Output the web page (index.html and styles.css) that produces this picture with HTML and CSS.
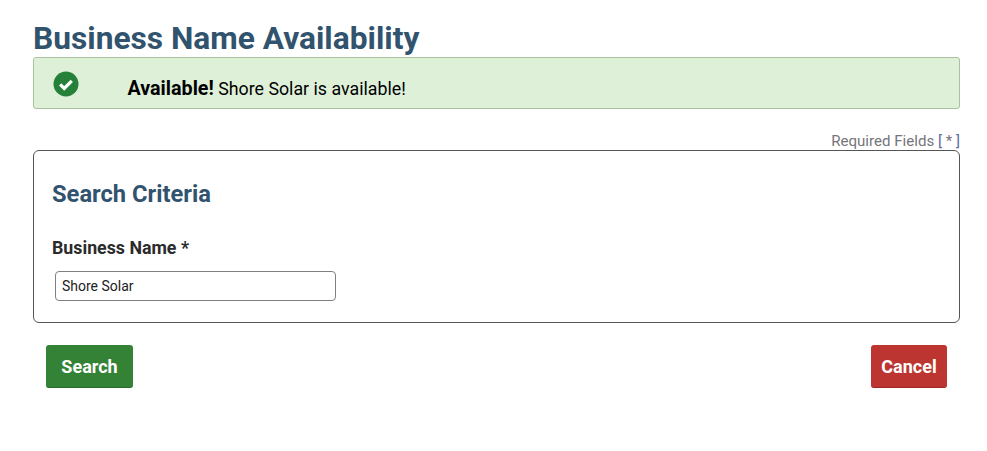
FILE: index.html
```html
<!DOCTYPE html>
<html lang="en">
<head>
    <meta charset="UTF-8">
    <title>Business Name Availability</title>
    <link rel="stylesheet" href="styles.css">
</head>
<body>
<div class="container">
    <h1>Business Name Availability</h1>

    <!-- result message -->
    <div class="alert-success">
        <svg class="alert-icon" width="26" height="26" viewBox="0 0 26 26">
            <circle cx="13" cy="13" r="12.5" fill="#258039"/>
            <path d="M7.2 13.4l4 4 7.6-7.6" fill="none" stroke="#fff" stroke-width="3.2"/>
        </svg>
        <div class="alert-text"><strong>Available!</strong> Shore Solar is available!</div>
    </div>

    <div class="required-note">Required Fields <span class="bracket">[</span> * <span class="bracket">]</span></div>

    <!-- search form -->
    <div class="box-criteria">
        <h2>Search Criteria</h2>
        <label for="businessName">Business Name *</label>
        <input type="text" id="businessName" value="Shore Solar">
    </div>

    <div class="button-group">
        <a href="#" class="btn btn-search">Search</a>
        <a href="#" class="btn btn-cancel">Cancel</a>
    </div>
</div>
</body>
</html>
```

FILE: styles.css
```css
/* base */
body {
    font-family: Roboto, Arial, sans-serif;
    margin: 0;
    background-color: #fff;
}
.container {
    width: 927px;
    margin-left: 33px;
    padding-top: 18px;
}

/* headings */
h1 {
    margin: 0;
    height: 39px;
    color: #31536e;
    font-size: 31.7px;
    line-height: 42px;
    font-weight: 700;
}
h2 {
    margin: 0 0 29px;
    color: #31536e;
    font-size: 23.7px;
    line-height: 28px;
    font-weight: 700;
}

/* result message */
.alert-success {
    display: flex;
    box-sizing: border-box;
    height: 52px;
    padding: 13px 19px;
    background: #dff0d8;
    border: 1px solid #a9c29e;
    border-radius: 3px;
}
.alert-icon {
    flex: none;
}
.alert-text {
    margin: 4px 0 0 48.5px;
    color: #000;
    font-size: 17.8px;
    line-height: 27px;
}
.alert-text strong {
    font-size: 19.7px;
}

.required-note {
    margin-top: 22px;
    height: 19px;
    color: #76747a;
    font-size: 15.1px;
    line-height: 21px;
    text-align: right;
}
.bracket {
    color: #5c6f9e;
}

/* search form */
.box-criteria {
    box-sizing: border-box;
    height: 173px;
    padding: 29px 18px 0;
    border: 1px solid #555;
    border-radius: 6px;
}
label {
    display: block;
    color: #2b2b2b;
    font-size: 17.8px;
    line-height: 22px;
    font-weight: 700;
}
input[type="text"] {
    display: block;
    box-sizing: border-box;
    width: 281px;
    height: 30px;
    margin: 12px 0 0 3px;
    padding: 0 6px;
    border: 1px solid #808080;
    border-radius: 4px;
    color: #222;
    font-family: Roboto, Arial, sans-serif;
    font-size: 14px;
}

/* buttons */
.button-group {
    display: flex;
    justify-content: space-between;
    margin-top: 22px;
    padding: 0 13px;
}
.btn {
    display: flex;
    justify-content: center;
    align-items: center;
    box-sizing: border-box;
    height: 43px;
    color: #fff;
    font-size: 18px;
    font-weight: 700;
    text-decoration: none;
    border-radius: 3px;
}
.btn-search {
    width: 87px;
    background: #348235;
    border-bottom: 1px solid #2a6b2b;
}
.btn-cancel {
    width: 76px;
    background: #bd3530;
    border-bottom: 1px solid #9c2b27;
}
```
